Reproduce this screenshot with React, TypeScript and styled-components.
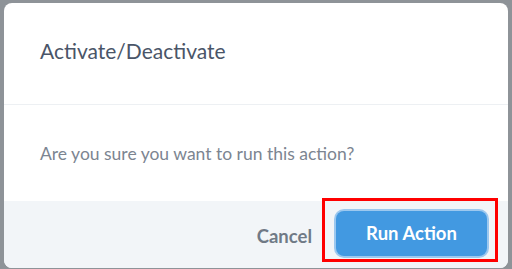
import styled, { createGlobalStyle } from "styled-components";

const GlobalStyle = createGlobalStyle`
  html, body {
    margin: 0;
    padding: 0;
    background: #8e9398;
    font-family: "Lato", "Open Sans", sans-serif;
  }
`;

const Backdrop = styled.div`
  width: 512px;
  height: 269px;
  padding: 3px 4px 0 4px;
  box-sizing: border-box;
  overflow: hidden;
`;

const Modal = styled.div`
  display: flex;
  flex-direction: column;
  height: 265px;
  background: #ffffff;
  border-radius: 8px;
  overflow: hidden;
`;

const Header = styled.div`
  display: flex;
  align-items: center;
  height: 102px;
  box-sizing: border-box;
  padding: 0 36px 7px;
  border-bottom: 1px solid #edf0f3;
`;

const Title = styled.h2`
  margin: 0;
  font-size: 21px;
  font-weight: 400;
  color: #4a5568;
`;

const Body = styled.div`
  display: flex;
  align-items: center;
  height: 96px;
  padding: 0 36px;
`;

const Message = styled.p`
  margin: 0;
  font-size: 17.5px;
  color: #7c8591;
`;

const Footer = styled.div`
  flex: 1;
  display: flex;
  align-items: flex-start;
  justify-content: flex-end;
  gap: 10px;
  padding: 0 10px 0 0;
  background: #f2f5f8;
`;

const TextButton = styled.button`
  align-self: center;
  margin-top: 2px;
  border: none;
  background: none;
  padding: 0;
  font-family: inherit;
  font-size: 18.5px;
  font-weight: 700;
  color: #707a86;
  cursor: pointer;
`;

const Highlight = styled.div`
  display: flex;
  margin-top: -3px;
  border: 3px solid #ff0000;
  padding: 10px 8px 3px 11px;
`;

const PrimaryButton = styled.button`
  width: 151px;
  height: 45px;
  padding-bottom: 2px;
  border: none;
  border-radius: 8px;
  background: #4299e1;
  box-shadow: 0 0 0 2px #9cc8ef;
  font-family: inherit;
  font-size: 18.5px;
  font-weight: 700;
  color: #ffffff;
  cursor: pointer;
`;

export default function App() {
  return (
    <>
      <GlobalStyle />
      <Backdrop>
        <Modal>
          <Header>
            <Title>Activate/Deactivate</Title>
          </Header>
          <Body>
            <Message>Are you sure you want to run this action?</Message>
          </Body>
          <Footer>
            <TextButton>Cancel</TextButton>
            <Highlight>
              <PrimaryButton>Run Action</PrimaryButton>
            </Highlight>
          </Footer>
        </Modal>
      </Backdrop>
    </>
  );
}
